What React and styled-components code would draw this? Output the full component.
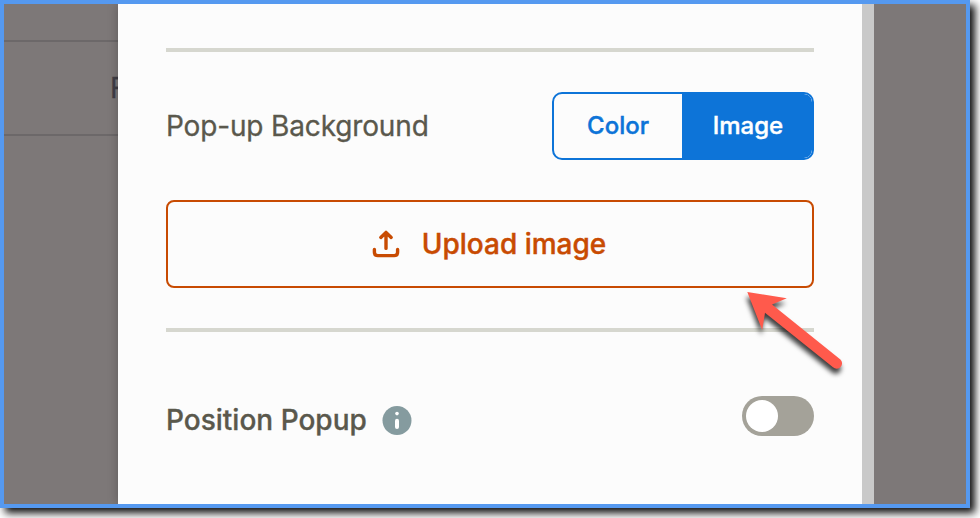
import React from "react";
import styled, { createGlobalStyle } from "styled-components";

const GlobalStyle = createGlobalStyle`
  * {
    box-sizing: border-box;
  }
  body {
    margin: 0;
    background: #fff;
    overflow: hidden;
    font-family: Inter, "Liberation Sans", sans-serif;
  }
`;

const Page = styled.div`
  width: 980px;
  height: 518px;
  overflow: hidden;
`;

const Frame = styled.div`
  position: relative;
  display: flex;
  width: 970px;
  height: 508px;
  border: 4px solid #5599f0;
  background: #7d7878;
  box-shadow: 5px 5px 8px rgba(0, 0, 0, 0.95);
  overflow: hidden;
`;

const Backdrop = styled.div`
  width: 114px;
  padding-top: 36px;
  overflow: hidden;
`;

const BackdropRow = styled.div`
  display: flex;
  align-items: center;
  height: 96px;
  padding-left: 106px;
  border-top: 2px solid #6c6869;
  border-bottom: 2px solid #6c6869;
  color: #403e46;
  font-size: 28px;
  -webkit-text-stroke: 0.3px;
`;

const Panel = styled.div`
  width: 744px;
  padding: 44px 48px 0;
  background: #fcfcfc;
  box-shadow: 0 0 10px rgba(0, 0, 0, 0.25);
`;

const Scrollbar = styled.div`
  position: relative;
  width: 12px;
  background: #c9c9c9;
`;

const Rest = styled.div`
  position: relative;
  flex: 1;
  background: #7d7878;
`;

const Divider = styled.div`
  height: 4px;
  background: #d6d7cf;
`;

const Row = styled.div`
  display: flex;
  align-items: ${(props) => props.$align || "center"};
  justify-content: space-between;
  height: ${(props) => props.$height}px;
  margin: ${(props) => props.$margin};
`;

const Label = styled.span`
  color: #5a584c;
  font-size: 28px;
  line-height: 40px;
  font-weight: ${(props) => (props.$bold ? 500 : 400)};
  letter-spacing: ${(props) => (props.$bold ? "0" : "-0.15px")};
  white-space: nowrap;
  -webkit-text-stroke: 0.3px;
`;

const Segments = styled.div`
  display: flex;
  width: 262px;
  height: 68px;
  border: 2px solid #0d74d8;
  border-radius: 10px;
  overflow: hidden;
`;

const Segment = styled.button`
  width: ${(props) => (props.$active ? 130 : 128)}px;
  padding: ${(props) => (props.$active ? "0 0 2px 2px" : "0 0 2px")};
  border: none;
  border-radius: ${(props) => (props.$active ? "0 8px 8px 0" : "0")};
  background: ${(props) => (props.$active ? "#0d74d8" : "transparent")};
  color: ${(props) => (props.$active ? "#fff" : "#0d74d8")};
  font-family: inherit;
  font-size: 24px;
  font-weight: 500;
  -webkit-text-stroke: 0.4px;
`;

const UploadButton = styled.button`
  display: flex;
  align-items: center;
  justify-content: center;
  gap: 20px;
  width: 100%;
  height: 88px;
  margin: 0 0 40px;
  padding: 0 4px 0 0;
  border: 2px solid #c84b02;
  border-radius: 8px;
  background: transparent;
  color: #c84b02;
  font-family: inherit;
  font-size: 28px;
  font-weight: 500;
  -webkit-text-stroke: 0.4px;
`;

const LabelGroup = styled.div`
  display: flex;
  align-items: center;
  gap: 15px;
  padding-top: 4px;
`;

const Toggle = styled.div`
  width: 72px;
  height: 40px;
  padding: 4px;
  border-radius: 20px;
  background: #a4a299;
`;

const Knob = styled.div`
  width: 32px;
  height: 32px;
  border-radius: 50%;
  background: #fff;
`;

const Arrow = styled.svg`
  position: absolute;
  left: 726px;
  top: 276px;
  filter: drop-shadow(-1px 5px 2.5px rgba(0, 0, 0, 0.75));
`;

const UploadIcon = () => (
  <svg
    width="32"
    height="32"
    viewBox="0 0 32 32"
    fill="none"
    stroke="currentColor"
    strokeWidth="3.4"
    strokeLinecap="round"
    strokeLinejoin="round"
  >
    <path d="M16 20.4V5M10.8 9.4L16 4.4L21.2 9.4" />
    <path d="M4.4 21.4V24.2Q4.4 27.6 7.8 27.6H24.2Q27.6 27.6 27.6 24.2V21.4" />
  </svg>
);

const InfoIcon = () => (
  <svg width="30" height="30" viewBox="0 0 30 30">
    <circle cx="15" cy="15.4" r="14.5" fill="#859b9f" />
    <circle cx="15" cy="8.6" r="1.8" fill="#fff" />
    <path d="M15 15.8V22" stroke="#fff" strokeWidth="4" strokeLinecap="round" />
  </svg>
);

const App = () => (
  <Page>
    <GlobalStyle />
    <Frame>
      <Backdrop>
        <BackdropRow>F</BackdropRow>
      </Backdrop>
      <Panel>
        <Divider />
        <Row $height={68} $margin="40px 0">
          <Label>Pop-up Background</Label>
          <Segments>
            <Segment>Color</Segment>
            <Segment $active>Image</Segment>
          </Segments>
        </Row>
        <UploadButton>
          <UploadIcon />
          Upload image
        </UploadButton>
        <Divider />
        <Row $height={44} $margin="64px 0 0" $align="flex-start">
          <LabelGroup>
            <Label $bold>Position Popup</Label>
            <InfoIcon />
          </LabelGroup>
          <Toggle>
            <Knob />
          </Toggle>
        </Row>
      </Panel>
      <Scrollbar />
      <Rest />
      <Arrow width="130" height="110" viewBox="730 280 130 110">
        <path
          d="M747.3 292L786.8 298.2L772 304.4L840.4 359.4A5.2 5.2 0 0 1 833 367.2L765 312.7L762.2 330Z"
          fill="#ff5a4c"
        />
      </Arrow>
    </Frame>
  </Page>
);

export default App;
